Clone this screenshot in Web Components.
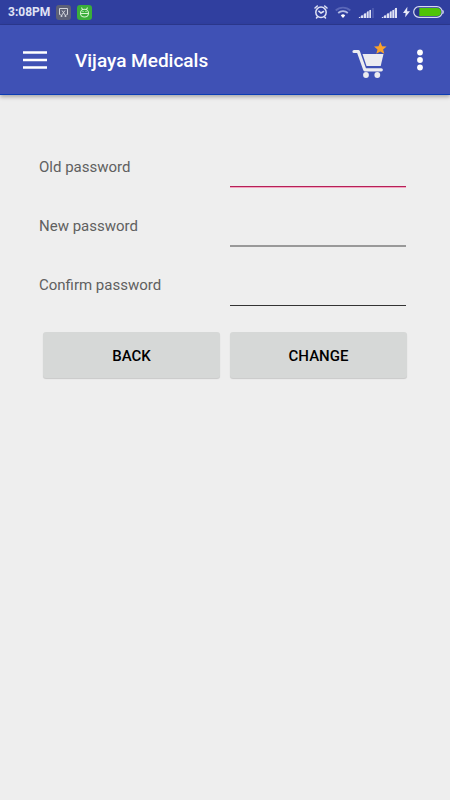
<!DOCTYPE html>
<html lang="en">
<head>
<meta charset="utf-8">
<meta name="viewport" content="width=device-width, initial-scale=1">
<title>Vijaya Medicals</title>
<style>
body { margin: 0; background: #eee; font-family: Roboto, "Liberation Sans", sans-serif; }
</style>
</head>
<body>
<password-page></password-page>

<template id="t-status">
<style>
:host { display: flex; align-items: center; justify-content: space-between; height: 25px; box-sizing: border-box; padding: 0 6px 0 8px; background: #303f9f; border-bottom: 1px solid #2c3890; color: #e0e3f5; }
div { display: flex; align-items: center; }
.left { gap: 6px; }
time { font-size: 12px; line-height: 16px; font-weight: 700; }
svg { display: block; }
.bat { margin-left: 3px; }
.wifi { margin: 0 7px; }
.sig { margin-right: 7px; }
.sig2 { margin-right: 6px; }
</style>
<div class="left">
  <time>3:08PM</time>
  <svg width="15" height="15" viewBox="0 0 15 15"><rect width="15" height="15" rx="3" fill="#5c6076"/><path d="M4.500 9.500H3.500V3.500h8v6h-1M6 5.500l3.500 5M9 5.500l-3.500 5" fill="none" stroke="#d3d5dc" stroke-width="1"/><circle cx="5.500" cy="11" r="1" fill="#d3d5dc"/><circle cx="9.500" cy="11" r="1" fill="#d3d5dc"/></svg>
  <svg width="15" height="15" viewBox="0 0 15 15"><rect width="15" height="15" rx="3" fill="#3aae3a"/><path d="M4.500 2.500l1 2M10.500 2.500l-1 2M3.500 8a4 3.800 0 0 1 8 0v.5a4 3.500 0 0 1-8 0zM3 8.500h9" fill="none" stroke="#d4f2cf" stroke-width="1.100"/><path d="M5.500 6h1v1h-1zM8.500 6h1v1h-1z" fill="#d4f2cf"/></svg>
</div>
<div>
  <svg width="14" height="14" viewBox="0 0 14 14" fill="none" stroke="#dfe2f4" stroke-width="1.500" stroke-linecap="round"><circle cx="7" cy="7.300" r="5.200"/><path d="M4.800 6.200L7 8l2.500-1.500M1 3l2.300-2M13 3l-2.300-2M3.300 12L2.500 13M10.700 12l.8 1"/></svg>
  <svg class="wifi" width="16" height="12" viewBox="0 0 16 12" fill="none" stroke-width="1.800"><path d="M.7 4.500a10.500 10.500 0 0 1 14.600 0" stroke="#5966b8"/><path d="M3.200 7a7 7 0 0 1 9.600 0" stroke="#b4bce4"/><path d="M5.800 9.400a3.200 3.200 0 0 1 4.400 0L8 12z" fill="#fff"/></svg>
  <svg class="sig" width="16" height="12" viewBox="0 0 16 12"><path d="M0 12L13 3.500V12z" fill="#7882c6"/><path d="M1 11h1v1H1zM3 9.500h2V12H3zM6 7.500h2V12H6zM9 5.500h1.500V12H9zM11.500 4H13v8h-1.500z" fill="#dfe2f4"/><path d="M14 2h2v10h-2z" fill="#4a58ae"/></svg>
  <svg class="sig2" width="16" height="12" viewBox="0 0 16 12"><path d="M0 12L16 1.500V12z" fill="#7882c6"/><path d="M1 11h1v1H1zM3 9.500h2V12H3zM6 7.500h2V12H6zM9 5.500h1.500V12H9zM11.500 4H13v8h-1.500zM14 2h2v10h-2z" fill="#dfe2f4"/></svg>
  <svg width="7" height="12" viewBox="0 0 8 12"><path d="M5 0L0 7h3L2.500 12 8 5H4.700z" fill="#e8eaf8"/></svg>
  <svg class="bat" width="31" height="12" viewBox="0 0 31 12"><rect x=".7" y=".7" width="28.500" height="10.600" rx="5.300" fill="#28358c" stroke="#d5d9f0" stroke-width="1.200"/><path d="M29.700 4q1.500 2 0 4" fill="none" stroke="#d5d9f0"/><path d="M6.300 2H24a4 4 0 0 1 0 8H6.300z" fill="#4fc407"/></svg>
</div>
</template>

<template id="t-bar">
<style>
:host { display: flex; align-items: center; height: 70px; box-sizing: border-box; padding: 0 24px 0 23px; background: #3f51b5; border-bottom: 1px solid #0b3cb4; box-shadow: 0 2px 4px rgba(0,0,0,.3); color: #fff; position: relative; }
button { border: 0; padding: 0; background: none; display: block; }
svg { display: block; }
h1 { flex: 1; margin: 0 0 0 28px; padding-top: 2px; font-size: 19px; line-height: 24px; font-weight: 500; }
.cart { margin-right: 26px; }
</style>
<button aria-label="Open menu"><svg width="24" height="18" viewBox="0 0 24 18"><path d="M0 .2h24v2.500H0zM0 7.700h24v2.500H0zM0 15.200h24v2.500H0z" fill="#fff"/></svg></button>
<h1><slot></slot></h1>
<button class="cart" aria-label="Cart"><svg width="36" height="38" viewBox="0 0 36 38"><path d="M2 10.500h4.300L12.800 28.800h16.500" fill="none" stroke="#ececf0" stroke-width="3.200" stroke-linecap="round" stroke-linejoin="round"/><path d="M10.500 13h21L28.700 25H14.500z" fill="#ececf0"/><circle cx="14" cy="34" r="2.900" fill="#ececf0"/><circle cx="25.300" cy="34" r="2.900" fill="#ececf0"/><path d="M28.300 1l1.800 4.200 4.500.3-3.500 2.900 1.200 4.400-4-2.400-4 2.400 1.200-4.400L22 5.500l4.500-.3z" fill="#f9a22b"/></svg></button>
<button aria-label="More options"><svg width="12" height="22" viewBox="0 0 12 22" fill="#fff"><circle cx="6" cy="3.500" r="2.900"/><circle cx="6" cy="11" r="2.900"/><circle cx="6" cy="18.500" r="2.900"/></svg></button>
</template>

<template id="t-field">
<style>
:host { display: grid; grid-template-columns: 13fr 12fr; height: 59px; align-items: end; }
label { font-size: 15px; line-height: 20px; padding-bottom: 11px; color: #606060; }
input { box-sizing: border-box; width: 100%; min-width: 0; height: 40px; padding: 0 4px; border: 0; border-bottom: 1px solid #333; border-radius: 0; outline: 0; background: none; font: inherit; font-size: 15px; color: #222; }
:host([tone="accent"]) input { border-color: #b52058; box-shadow: 0 1px #f3a5bf; margin-bottom: 1px; }
:host([tone="soft"]) input { border-bottom: 2px solid #999; }
</style>
<label for="f"><slot></slot></label><input id="f" type="password">
</template>

<template id="t-button">
<style>
:host { display: block; flex: 1; }
button { width: 100%; height: 46px; border: 0; border-radius: 3px; padding: 2px 0 0; background: #d6d8d7; box-shadow: 0 1px 1px rgba(0,0,0,.16); font: 500 15px/20px Roboto, "Liberation Sans", sans-serif; color: #000; }
</style>
<button type="button"><slot></slot></button>
</template>

<template id="t-page">
<style>
:host { display: block; min-height: 100vh; background: #eee; }
form { padding: 34px 43px 0; }
.fields { margin: 0 1px 0 -4px; }
.actions { display: flex; gap: 10px; margin-top: 26px; }
</style>
<status-bar></status-bar>
<app-bar>Vijaya Medicals</app-bar>
<form>
  <div class="fields">
    <password-field tone="accent">Old password</password-field>
    <password-field tone="soft">New password</password-field>
    <password-field>Confirm password</password-field>
  </div>
  <div class="actions"><action-button>BACK</action-button><action-button>CHANGE</action-button></div>
</form>
</template>

<script>
const define = (name, templateId) => customElements.define(name, class extends HTMLElement {
  constructor() {
    super();
    this.attachShadow({ mode: "open" }).append(document.getElementById(templateId).content.cloneNode(true));
  }
});
define("status-bar", "t-status");
define("app-bar", "t-bar");
define("password-field", "t-field");
define("action-button", "t-button");
define("password-page", "t-page");
</script>
</body>
</html>
